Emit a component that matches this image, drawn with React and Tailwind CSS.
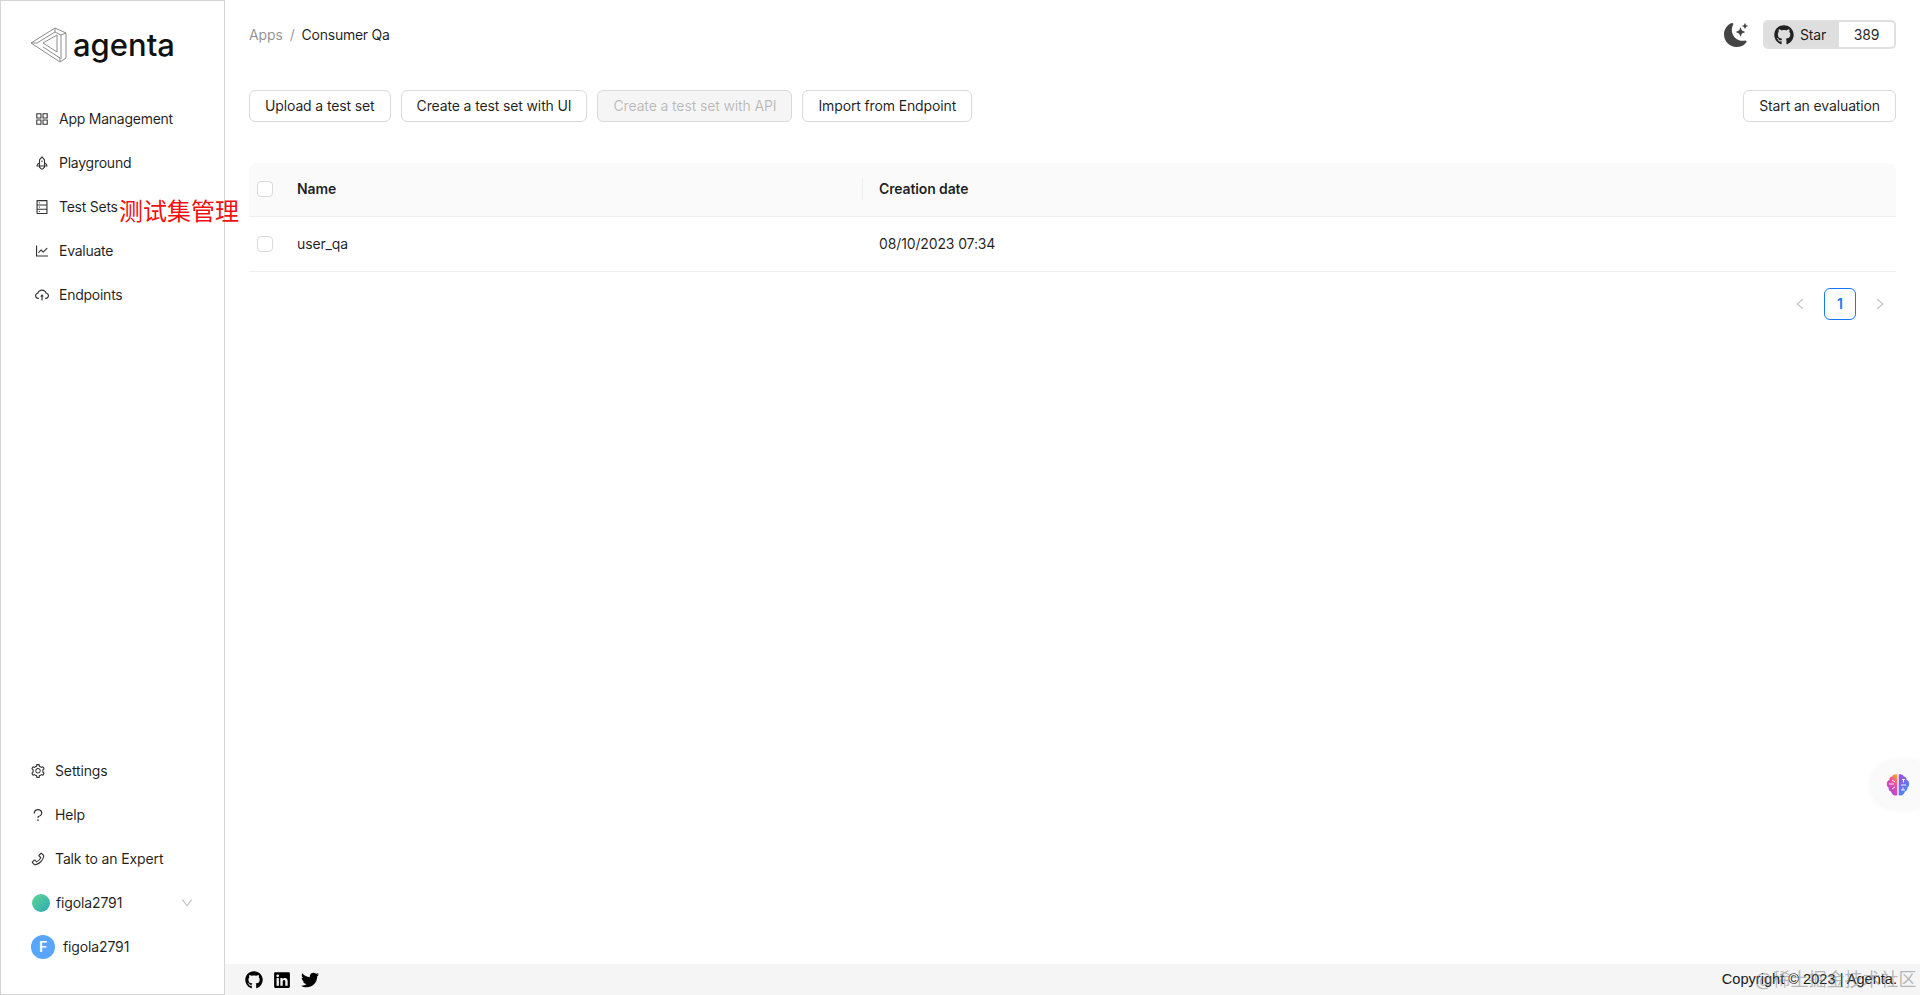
import React from "react";
import {
  AiOutlineAppstore,
  AiOutlineRocket,
  AiOutlineDatabase,
  AiOutlineLineChart,
  AiOutlineCloudUpload,
  AiOutlineSetting,
  AiOutlineQuestion,
  AiOutlinePhone,
  AiOutlineDown,
  AiOutlineLeft,
  AiOutlineRight,
} from "react-icons/ai";
import { FaGithub, FaLinkedin, FaTwitter } from "react-icons/fa";
import { BsMoonStarsFill } from "react-icons/bs";

const topNav = [
  { label: "App Management", icon: AiOutlineAppstore },
  { label: "Playground", icon: AiOutlineRocket },
  { label: "Test Sets", icon: AiOutlineDatabase },
  { label: "Evaluate", icon: AiOutlineLineChart },
  { label: "Endpoints", icon: AiOutlineCloudUpload },
];

const bottomNav = [
  { label: "Settings", icon: AiOutlineSetting },
  { label: "Help", icon: AiOutlineQuestion },
  { label: "Talk to an Expert", icon: AiOutlinePhone },
];

const Logo = () => (
  <svg width="38" height="38" viewBox="0 0 38 38" fill="none" stroke="#8c8c8c" strokeWidth="1">
    <path d="M1 17 L25 2 L36 7 L36 32 L30 36 L1 17 Z" />
    <path d="M7 17 L25 6 L31 9 L31 33" />
    <path d="M13 17 L27 9 L27 26 Z" />
    <path d="M25 2 L25 6 M1 17 L7 17 M36 7 L31 9 M30 36 L30 32 L13 21" />
  </svg>
);

const Brain = () => (
  <svg width="24" height="24" viewBox="0 0 24 24">
    <defs>
      <linearGradient id="brainLeft" x1="0.8" y1="0" x2="0.2" y2="1">
        <stop offset="0" stopColor="#f5a03c" />
        <stop offset="0.35" stopColor="#ee4f9c" />
        <stop offset="1" stopColor="#9b45ea" />
      </linearGradient>
      <linearGradient id="brainRight" x1="0.2" y1="0" x2="0.8" y2="1">
        <stop offset="0" stopColor="#a04ee8" />
        <stop offset="1" stopColor="#3597f6" />
      </linearGradient>
    </defs>
    <path
      fill="url(#brainLeft)"
      d="M11.3 1.5 C9 0.8 7 1.6 6.2 3.4 C4.4 3.6 3.2 5 3.4 6.8 C1.6 7.6 0.8 9.2 0.8 11 C0.8 12.6 1.4 13.8 2.6 14.6 C2.4 16.6 3.4 18.2 5.2 18.8 C5.6 20.8 7.2 22.4 9.2 22.6 C10 22.7 10.8 22.4 11.3 22 Z"
    />
    <path
      fill="url(#brainRight)"
      d="M12.7 1.5 C15 0.8 17 1.6 17.8 3.4 C19.6 3.6 20.8 5 20.6 6.8 C22.4 7.6 23.2 9.2 23.2 11 C23.2 12.6 22.6 13.8 21.4 14.6 C21.6 16.6 20.6 18.2 18.8 18.8 C18.4 20.8 16.8 22.4 14.8 22.6 C14 22.7 13.2 22.4 12.7 22 Z"
    />
    <path
      fill="none"
      stroke="#fff"
      strokeWidth="0.9"
      d="M3 11 H8 M6 7 L9 9 M6 16 L9 14 M16 6.5 H19 M17.5 6.5 V9.5 M15 12 H20 M15 17 H19 M17 17 V14.5"
    />
  </svg>
);

const Button = ({ children, disabled }) => (
  <button
    className={
      disabled
        ? "h-8 px-[15px] rounded-md border border-[#d9d9d9] bg-[#f5f5f5] text-[rgba(0,0,0,0.25)] text-sm tracking-[-0.13px] whitespace-nowrap"
        : "h-8 px-[15px] rounded-md border border-[#d9d9d9] bg-white text-[rgba(0,0,0,0.88)] text-sm tracking-[-0.13px] whitespace-nowrap"
    }
  >
    {children}
  </button>
);

const Checkbox = () => (
  <span className="block w-4 h-4 rounded border border-[#d9d9d9] bg-white" />
);

const App = () => {
  return (
    <div className="relative flex h-[995px] w-[1920px] overflow-hidden bg-white text-sm tracking-[-0.13px] text-[rgba(0,0,0,0.88)] font-['Inter','Noto_Sans_CJK_SC',sans-serif]">
      <aside className="flex flex-col justify-between w-[225px] shrink-0 border border-[#d4d4d4]">
        <div>
          <div className="flex items-start gap-[5px] pl-[29px] pt-[25px] h-[90px]">
            <Logo />
            <span className="text-[31px] leading-[38px] font-medium text-[#111] tracking-normal">agenta</span>
          </div>
          <nav className="flex flex-col pt-[6px] tracking-[-0.25px]">
            {topNav.map(({ label, icon: Icon }) => (
              <div key={label} className="flex items-center h-11 pl-[33px] gap-[9px]">
                <Icon className="w-4 h-4 text-[#333]" />
                <span>{label}</span>
              </div>
            ))}
          </nav>
        </div>
        <div className="pb-[25px]">
          {bottomNav.map(({ label, icon: Icon }) => (
            <div key={label} className="flex items-center h-11 pl-[29px] gap-[9px]">
              <Icon className="w-4 h-4 text-[#333]" />
              <span>{label}</span>
            </div>
          ))}
          <div className="flex items-center h-11 pl-[31px] pr-[30px]">
            <span className="w-[18px] h-[18px] rounded-full bg-linear-to-br from-[#5fd68f] to-[#2fa8b5]" />
            <span className="ml-[6px] flex-1">figola2791</span>
            <AiOutlineDown className="w-[14px] h-[14px] text-[#bfbfbf]" />
          </div>
          <div className="flex items-center h-11 pl-[30px] gap-[8px]">
            <span className="flex items-center justify-center w-6 h-6 rounded-full bg-[#58a5fb] text-white font-semibold text-sm">F</span>
            <span>figola2791</span>
          </div>
        </div>
      </aside>

      <div className="flex flex-col flex-1 min-w-0">
        <main className="flex-1 pl-[24px] pr-[24px]">
          <header className="flex items-center justify-between h-[70px] pb-[1px]">
            <div className="flex items-center gap-[7px]">
              <span className="text-[rgba(0,0,0,0.45)]">Apps</span>
              <span className="text-[rgba(0,0,0,0.45)]">/</span>
              <span className="tracking-[-0.25px]">Consumer Qa</span>
            </div>
            <div className="flex items-center gap-[15px]">
              <BsMoonStarsFill className="w-6 h-6 text-[#444]" />
              <div className="flex h-[29px] w-[133px] rounded-[5px] border-2 border-[#e0e0e0] overflow-hidden">
                <div className="flex items-center gap-[6px] w-[74px] bg-[#dedede] pl-[9px]">
                  <FaGithub className="w-5 h-5 text-[#222]" />
                  <span>Star</span>
                </div>
                <div className="flex-1 flex items-center justify-center">389</div>
              </div>
            </div>
          </header>

          <div className="flex justify-between mt-[20px]">
            <div className="flex gap-[10px]">
              <Button>Upload a test set</Button>
              <Button>Create a test set with UI</Button>
              <Button disabled>Create a test set with API</Button>
              <Button>Import from Endpoint</Button>
            </div>
            <Button>Start an evaluation</Button>
          </div>

          <div className="mt-[41px]">
            <div className="flex items-center h-[54px] pb-[1px] bg-[#fafafa] border-b border-[#f0f0f0] rounded-t-lg font-semibold">
              <div className="w-[48px] pl-[8px]"><Checkbox /></div>
              <div className="w-[565px]">Name</div>
              <div className="w-px h-[22px] bg-[#f0f0f0]" />
              <div className="pl-[16px]">Creation date</div>
            </div>
            <div className="flex items-center h-[55px] border-b border-[#f0f0f0]">
              <div className="w-[48px] pl-[8px]"><Checkbox /></div>
              <div className="w-[566px]">user_qa</div>
              <div className="pl-[16px]">08/10/2023 07:34</div>
            </div>
          </div>

          <div className="flex items-center justify-end gap-[8px] mt-[16px] text-[#bfbfbf]">
            <span className="flex items-center justify-center w-8 h-8"><AiOutlineLeft className="w-[14px] h-[14px]" /></span>
            <span className="flex items-center justify-center w-8 h-8 rounded-md border border-[#1677ff] bg-white text-[#1677ff] font-semibold">1</span>
            <span className="flex items-center justify-center w-8 h-8"><AiOutlineRight className="w-[14px] h-[14px]" /></span>
          </div>
        </main>

        <footer className="flex items-center justify-between h-[31px] bg-[#f5f5f5] pl-[20px] pr-[23px] text-[#1a1a1a]">
          <div className="flex items-center gap-[10px] text-black">
            <FaGithub className="w-[18px] h-[18px]" />
            <FaLinkedin className="w-[18px] h-[18px]" />
            <FaTwitter className="w-[18px] h-[18px]" />
          </div>
          <span className="text-[14.6px] tracking-normal font-['Liberation_Sans',sans-serif]">Copyright © 2023 | Agenta.</span>
        </footer>
      </div>

      {/* annotation over the nav */}
      <span className="absolute left-[119px] top-[198px] text-[24px] leading-[28px] tracking-normal text-[#f01010] whitespace-nowrap">测试集管理</span>

      {/* floating brain widget */}
      <div className="absolute right-0 top-[762px] flex items-center w-[48px] h-[46px] pl-[14px] bg-[#fafafa] rounded-l-[22px] shadow-[0_0_8px_rgba(0,0,0,0.06)]">
        <Brain />
      </div>

      {/* site watermark */}
      <span className="absolute left-[1755px] top-[968px] text-[18px] leading-[24px] tracking-normal text-[rgba(120,120,120,0.5)] whitespace-nowrap">@稀土掘金技术社区</span>
    </div>
  );
};

export default App;
